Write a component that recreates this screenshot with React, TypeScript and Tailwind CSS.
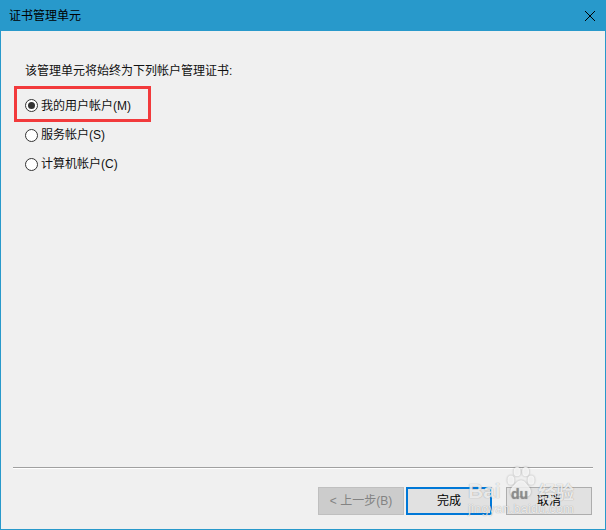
const otherOptions = ['服务帐户(S)', '计算机帐户(C)']

const Radio = ({ checked = false }: { checked?: boolean }) => (
  <span className="flex h-[13px] w-[13px] shrink-0 items-center justify-center rounded-full border border-[#333333] bg-white">
    {checked && <span className="h-[7px] w-[7px] rounded-full bg-[#333333]" />}
  </span>
)

const Watermark = () => (
  <div className="pointer-events-none absolute left-[462px] top-[462px] h-[60px] w-[116px] text-white/80 [text-shadow:0_0_1px_rgba(0,0,0,0.4)]">
    <svg className="absolute left-[43px] top-[5px] drop-shadow-[0_0_1px_rgba(0,0,0,0.35)]" width="30" height="31" viewBox="0 0 36 40" fill="currentColor">
      <ellipse cx="5" cy="17" rx="4.5" ry="6" />
      <ellipse cx="13" cy="6" rx="4.5" ry="6" />
      <ellipse cx="24" cy="6" rx="4.5" ry="6" />
      <ellipse cx="31" cy="17" rx="4.5" ry="6" />
      <path d="M18 17c5 0 7 5 10 8 4 4 4 12-2 13-3 .6-5-1-8-1s-5 2-9 1c-6-1-6-9-2-13 4-3 6-8 11-8z" />
    </svg>
    <span className="absolute left-[5px] top-[18px] font-['Liberation_Sans',sans-serif] text-[21px] leading-none font-bold">Bai</span>
    <span className="absolute left-[48px] top-[25px] font-['Liberation_Sans',sans-serif] text-[14px] leading-none font-bold text-[#8a8a8a]/80">du</span>
    <span className="absolute left-[75px] top-[20px] font-['Noto_Sans_CJK_SC',sans-serif] text-[18px] leading-none font-bold">经验</span>
    <span className="absolute left-[5px] top-[41px] font-['Liberation_Sans',sans-serif] text-[12.5px] leading-none tracking-[0.3px]">jingyan.baidu.com</span>
  </div>
)

const App = () => {
  return (
    <div className="relative flex h-[530px] w-[606px] flex-col overflow-hidden border-x border-b border-[#2899cb] bg-[#f0f0f0] font-['Liberation_Sans','Noto_Sans_CJK_SC',sans-serif] text-xs text-[#111111]">
      <div className="-mx-px flex h-[31px] shrink-0 items-center justify-between bg-[#2899cb] pl-[9px] pr-[10px]">
        <span className="text-black">证书管理单元</span>
        <svg width="12" height="12" viewBox="0 0 12 12" stroke="#000000" strokeWidth="1" fill="none">
          <path d="M1 1l10 10M11 1L1 11" />
        </svg>
      </div>

      <div className="flex flex-1 flex-col pl-[13px] pt-[33px]">
        <p className="pl-[11px] leading-[14px]">该管理单元将始终为下列帐户管理证书:</p>
        <label className="mt-[8px] flex h-[36px] w-[137px] items-center gap-[3px] border-[3px] border-[#f23a3c] pl-[8px] pt-[3px]">
          <Radio checked />
          我的用户帐户(M)
        </label>
        <div className="mt-[6px] flex flex-col gap-[15px] pl-[11px]">
          {otherOptions.map((option) => (
            <label key={option} className="flex h-[14px] items-center gap-[3px]">
              <Radio />
              {option}
            </label>
          ))}
        </div>
      </div>

      <div className="mx-[12px] border-t border-b border-t-[#a0a0a0] border-b-white" />

      <div className="flex h-[60px] shrink-0 items-start justify-end pr-[13px] pt-[18px]">
        <button className="h-[28px] w-[86px] border border-[#bfbfbf] bg-[#cccccc] text-[#838383]">&lt; 上一步(B)</button>
        <button className="ml-[2px] h-[28px] w-[86px] border-2 border-[#0078d7] bg-[#e1e1e1] text-black">完成</button>
        <button className="ml-[14px] h-[28px] w-[86px] border border-[#adadad] bg-[#e1e1e1] text-black">取消</button>
      </div>

      <Watermark />
    </div>
  )
}

export default App
